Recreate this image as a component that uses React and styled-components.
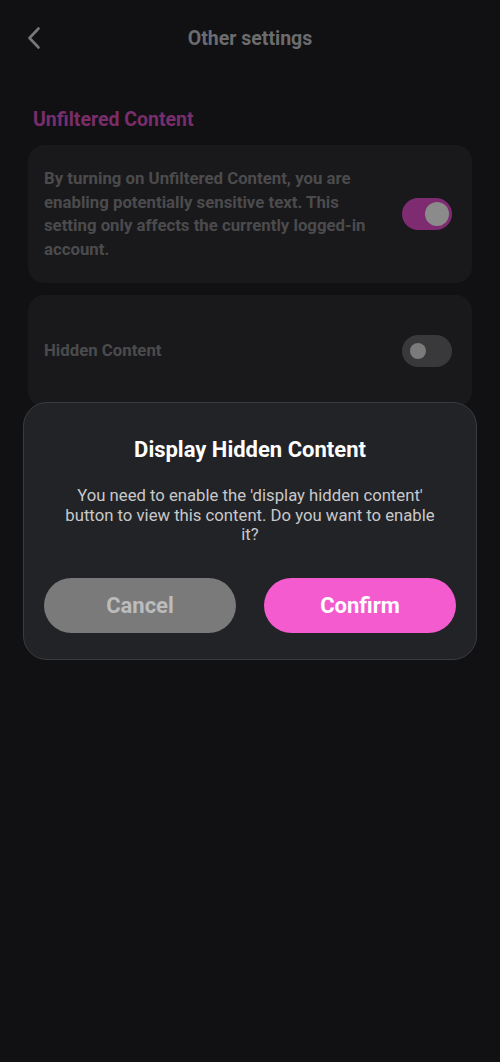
import React from "react";
import styled, { createGlobalStyle } from "styled-components";

const GlobalStyle = createGlobalStyle`
  html, body {
    margin: 0;
    padding: 0;
    background: #111113;
  }
  body {
    font-family: Roboto, "Noto Sans", "Liberation Sans", sans-serif;
  }
  * { box-sizing: border-box; }
`;

const Screen = styled.div`
  position: relative;
  width: 500px;
  height: 1062px;
  background: #111113;
  overflow: hidden;
`;

const Page = styled.div`
  display: flex;
  flex-direction: column;
  padding: 0 28px;
`;

const Header = styled.header`
  position: relative;
  height: 76px;
  display: flex;
  align-items: center;
  justify-content: center;
`;

const BackButton = styled.button`
  position: absolute;
  left: -8px;
  top: 24px;
  width: 28px;
  height: 28px;
  padding: 0;
  border: 0;
  background: none;
  display: flex;
  align-items: center;
  justify-content: center;
`;

const Title = styled.h1`
  margin: 0;
  font-size: 19.5px;
  font-weight: 700;
  color: #6c6c6e;
`;

const SectionLabel = styled.h2`
  margin: 32px 0 13px 5px;
  font-size: 19.5px;
  font-weight: 700;
  color: #7a2d6b;
  line-height: 24px;
`;

const Card = styled.div`
  display: flex;
  align-items: center;
  gap: 22px;
  background: #19191b;
  border-radius: 16px;
  padding: ${(p) => p.$pad || "22px 20px 21px 16px"};
  min-height: ${(p) => p.$minHeight || "auto"};
  margin-bottom: 12px;
`;

const CardText = styled.p`
  flex: 1;
  margin: 0;
  font-size: 16.8px;
  font-weight: 700;
  line-height: 23.7px;
  color: #4b4b4d;
`;

const Toggle = styled.span`
  position: relative;
  flex: none;
  width: 50px;
  height: 32px;
  border-radius: 16px;
  background: ${(p) => (p.$on ? "#7e2b71" : "#39393b")};
`;

const Knob = styled.span`
  position: absolute;
  top: 50%;
  transform: translateY(-50%);
  width: ${(p) => (p.$on ? "24px" : "16px")};
  height: ${(p) => (p.$on ? "24px" : "16px")};
  left: ${(p) => (p.$on ? "23px" : "8px")};
  border-radius: 50%;
  background: ${(p) => (p.$on ? "#8b8b8b" : "#7b7b7b")};
`;

const Dialog = styled.div`
  position: absolute;
  left: 23px;
  top: 402px;
  width: 454px;
  background: #222326;
  border: 1px solid #3a3b3e;
  border-radius: 24px;
  padding: 34px 20px 26px;
  display: flex;
  flex-direction: column;
  align-items: center;
`;

const DialogTitle = styled.h3`
  margin: 0;
  font-size: 22px;
  font-weight: 700;
  line-height: 26px;
  color: #ffffff;
`;

const DialogBody = styled.p`
  margin: 23px 0 0;
  padding: 0 20px;
  font-size: 16.7px;
  line-height: 19.7px;
  text-align: center;
  color: #c9c9cb;
`;

const Actions = styled.div`
  align-self: stretch;
  display: flex;
  gap: 28px;
  margin-top: 33px;
`;

const ActionButton = styled.button`
  flex: 1;
  height: 55px;
  border: 0;
  border-radius: 28px;
  font-family: inherit;
  font-size: 22px;
  font-weight: 700;
  background: ${(p) => (p.$primary ? "#f35bcf" : "#7a7a7a")};
  color: ${(p) => (p.$primary ? "#ffffff" : "#bcbcbc")};
`;

function ChevronLeft() {
  return (
    <svg width="16" height="24" viewBox="0 0 16 24" fill="none">
      <path
        d="M12.5 2.5 L3.5 12 L12.5 21.5"
        stroke="#78787a"
        strokeWidth="2.6"
        strokeLinecap="round"
        strokeLinejoin="round"
      />
    </svg>
  );
}

export default function App() {
  return (
    <>
      <GlobalStyle />
      <Screen>
        <Page>
          <Header>
            <BackButton aria-label="Back">
              <ChevronLeft />
            </BackButton>
            <Title>Other settings</Title>
          </Header>

          <SectionLabel>Unfiltered Content</SectionLabel>

          <Card>
            <CardText>
              By turning on Unfiltered Content, you are enabling potentially
              sensitive text. This setting only affects the currently
              logged-in account.
            </CardText>
            <Toggle $on>
              <Knob $on />
            </Toggle>
          </Card>

          <Card $pad="0 20px 0 16px" $minHeight="112px">
            <CardText>Hidden Content</CardText>
            <Toggle>
              <Knob />
            </Toggle>
          </Card>
        </Page>

        <Dialog role="dialog">
          <DialogTitle>Display Hidden Content</DialogTitle>
          <DialogBody>
            You need to enable the 'display hidden content' button to view
            this content. Do you want to enable it?
          </DialogBody>
          <Actions>
            <ActionButton>Cancel</ActionButton>
            <ActionButton $primary>Confirm</ActionButton>
          </Actions>
        </Dialog>
      </Screen>
    </>
  );
}
